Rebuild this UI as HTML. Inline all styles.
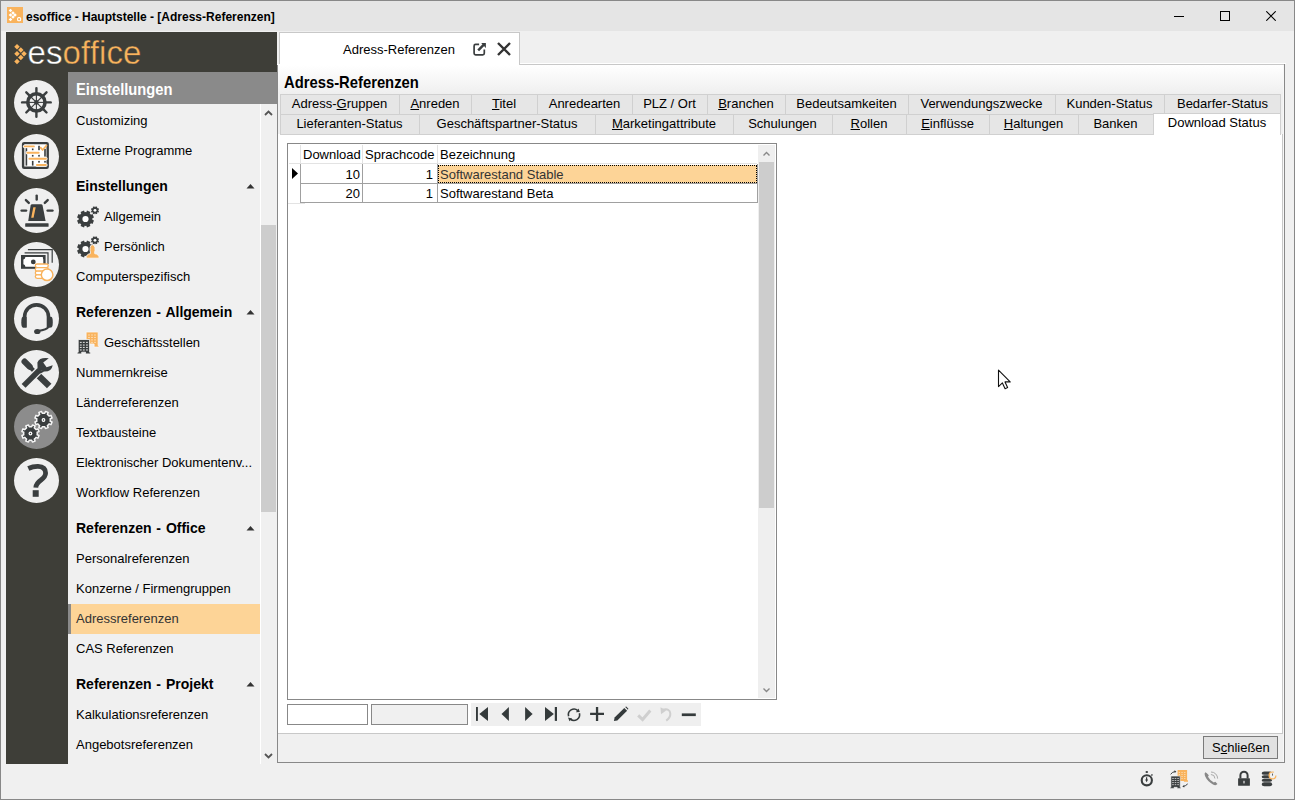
<!DOCTYPE html>
<html><head><meta charset="utf-8">
<style>
*{box-sizing:border-box;margin:0;padding:0}
html,body{width:1295px;height:800px;overflow:hidden;background:#f0f0f0;font-family:'Liberation Sans',sans-serif;color:#000}
.a{position:absolute}
.t{position:absolute;white-space:nowrap}
u{text-decoration:underline;text-underline-offset:1px}
</style></head><body>
<div class="a" style="left:0px;top:0px;width:1295px;height:800px;background:#888;"></div>
<div class="a" style="left:1px;top:1px;width:1293px;height:798px;background:#f0f0f0;"></div>
<div class="a" style="left:1px;top:1px;width:1293px;height:30px;background:#e5e5e5;"></div>
<div class="a" style="left:7px;top:7px;width:16px;height:16px;background:#f9b35d;"></div>
<svg class="a" style="left:7px;top:7px;" width="16" height="16" viewBox="0 0 16 16"></svg>
<svg class="a" style="left:0px;top:0px;" width="30" height="30" viewBox="0 0 30 30"><rect x="9.2" y="9.2" width="2.6" height="2.6" transform="rotate(45 10.5 10.5)" fill="#fff"/><rect x="11.7" y="11.7" width="2.6" height="2.6" transform="rotate(45 13 13)" fill="#fff"/><rect x="9.2" y="13.7" width="2.6" height="2.6" transform="rotate(45 10.5 15)" fill="#fff"/><rect x="13.7" y="13.7" width="2.6" height="2.6" transform="rotate(45 15 15)" fill="#fff"/><rect x="11.7" y="15.7" width="2.6" height="2.6" transform="rotate(45 13 17)" fill="#fff"/><rect x="9.2" y="18.2" width="2.6" height="2.6" transform="rotate(45 10.5 19.5)" fill="#fff"/><rect x="17.6" y="17.6" width="3" height="3.2" rx="1" fill="none" stroke="#fff" stroke-width="1.1"/></svg>
<div class="t" style="left:26px;top:10px;font:bold 12px 'Liberation Sans',sans-serif;color:#000;">esoffice - Hauptstelle - [Adress-Referenzen]</div>
<div class="a" style="left:1174px;top:16px;width:10px;height:1px;background:#000;"></div>
<div class="a" style="left:1220px;top:11px;width:10px;height:10px;border:1px solid #000"></div>
<svg class="a" style="left:1266px;top:11px;" width="10" height="10" viewBox="0 0 10 10"><path d="M0.3 0.3L9.7 9.7M9.7 0.3L0.3 9.7" stroke="#000" stroke-width="1.1"/></svg>
<div class="a" style="left:6px;top:32px;width:271px;height:732px;background:#3e3e38;"></div>
<svg class="a" style="left:12px;top:40px;" width="20" height="28" viewBox="0 0 20 28"><rect x="3.05" y="4.85" width="3.9" height="3.9" transform="rotate(45 5 6.8)" fill="#f9b35d"/><rect x="6.8500000000000005" y="8.05" width="3.9" height="3.9" transform="rotate(45 8.8 10)" fill="#f9b35d"/><rect x="3.05" y="11.850000000000001" width="3.9" height="3.9" transform="rotate(45 5 13.8)" fill="#f9b35d"/><rect x="10.05" y="11.850000000000001" width="3.9" height="3.9" transform="rotate(45 12 13.8)" fill="#f9b35d"/><rect x="6.8500000000000005" y="15.650000000000002" width="3.9" height="3.9" transform="rotate(45 8.8 17.6)" fill="#f9b35d"/><rect x="3.05" y="19.45" width="3.9" height="3.9" transform="rotate(45 5 21.4)" fill="#f9b35d"/></svg>
<div class="t" style="left:27.5px;top:34px;font:normal 33px 'Liberation Sans',sans-serif;letter-spacing:0.1px;-webkit-text-stroke:0.4px #3e3e38"><span style="color:#fff">es</span><span style="color:#f9b35d">office</span></div>
<div class="a" style="left:14px;top:79.5px;width:45px;height:45px;border-radius:50%;background:#efefef"></div>
<div class="a" style="left:14px;top:133.5px;width:45px;height:45px;border-radius:50%;background:#efefef"></div>
<div class="a" style="left:14px;top:187.5px;width:45px;height:45px;border-radius:50%;background:#efefef"></div>
<div class="a" style="left:14px;top:241.5px;width:45px;height:45px;border-radius:50%;background:#efefef"></div>
<div class="a" style="left:14px;top:295.5px;width:45px;height:45px;border-radius:50%;background:#efefef"></div>
<div class="a" style="left:14px;top:349.5px;width:45px;height:45px;border-radius:50%;background:#efefef"></div>
<div class="a" style="left:14px;top:403.5px;width:45px;height:45px;border-radius:50%;background:#8c8c8c"></div>
<div class="a" style="left:14px;top:457.5px;width:45px;height:45px;border-radius:50%;background:#efefef"></div>
<svg class="a" style="left:12px;top:78px;" width="48" height="48" viewBox="0 0 48 48"><circle cx="24.4" cy="24.4" r="8.6" fill="none" stroke="#3a3e3f" stroke-width="3.6"/><circle cx="24.4" cy="24.4" r="2.3" fill="#3a3e3f"/><line x1="24.40" y1="24.40" x2="32.40" y2="24.40" stroke="#3a3e3f" stroke-width="1.1"/><line x1="34.40" y1="24.40" x2="38.70" y2="24.40" stroke="#3a3e3f" stroke-width="2.4" stroke-linecap="round"/><line x1="24.40" y1="24.40" x2="30.06" y2="30.06" stroke="#3a3e3f" stroke-width="1.1"/><line x1="31.47" y1="31.47" x2="34.51" y2="34.51" stroke="#3a3e3f" stroke-width="2.4" stroke-linecap="round"/><line x1="24.40" y1="24.40" x2="24.40" y2="32.40" stroke="#3a3e3f" stroke-width="1.1"/><line x1="24.40" y1="34.40" x2="24.40" y2="38.70" stroke="#3a3e3f" stroke-width="2.4" stroke-linecap="round"/><line x1="24.40" y1="24.40" x2="18.74" y2="30.06" stroke="#3a3e3f" stroke-width="1.1"/><line x1="17.33" y1="31.47" x2="14.29" y2="34.51" stroke="#3a3e3f" stroke-width="2.4" stroke-linecap="round"/><line x1="24.40" y1="24.40" x2="16.40" y2="24.40" stroke="#3a3e3f" stroke-width="1.1"/><line x1="14.40" y1="24.40" x2="10.10" y2="24.40" stroke="#3a3e3f" stroke-width="2.4" stroke-linecap="round"/><line x1="24.40" y1="24.40" x2="18.74" y2="18.74" stroke="#3a3e3f" stroke-width="1.1"/><line x1="17.33" y1="17.33" x2="14.29" y2="14.29" stroke="#3a3e3f" stroke-width="2.4" stroke-linecap="round"/><line x1="24.40" y1="24.40" x2="24.40" y2="16.40" stroke="#3a3e3f" stroke-width="1.1"/><line x1="24.40" y1="14.40" x2="24.40" y2="10.10" stroke="#3a3e3f" stroke-width="2.4" stroke-linecap="round"/><line x1="24.40" y1="24.40" x2="30.06" y2="18.74" stroke="#3a3e3f" stroke-width="1.1"/><line x1="31.47" y1="17.33" x2="34.51" y2="14.29" stroke="#3a3e3f" stroke-width="2.4" stroke-linecap="round"/></svg>
<svg class="a" style="left:12px;top:132px;" width="48" height="48" viewBox="0 0 48 48"><rect x="11.1" y="11.1" width="24.6" height="24.6" rx="1" fill="#fff" stroke="#3a3e3f" stroke-width="2.4"/><rect x="13.6" y="16.2" width="1.6" height="17.400000000000002" fill="#3a3e3f"/><rect x="19.9" y="16.5" width="1.6" height="1.6999999999999993" fill="#3a3e3f"/><rect x="19.9" y="22.8" width="1.6" height="1.8000000000000007" fill="#3a3e3f"/><rect x="19.9" y="28.8" width="1.6" height="4.800000000000001" fill="#3a3e3f"/><rect x="26.2" y="13.8" width="1.6" height="4.399999999999999" fill="#3a3e3f"/><rect x="26.2" y="22.8" width="1.6" height="1.8000000000000007" fill="#3a3e3f"/><rect x="26.2" y="28.8" width="1.6" height="1.8000000000000007" fill="#3a3e3f"/><rect x="32.2" y="16.8" width="1.6" height="7.800000000000001" fill="#3a3e3f"/><rect x="32.2" y="28.8" width="1.6" height="1.8000000000000007" fill="#3a3e3f"/><line x1="12.6" y1="14.4" x2="21.9" y2="14.4" stroke="#fff" stroke-width="3.4" stroke-linecap="round"/><line x1="12.6" y1="14.4" x2="21.9" y2="14.4" stroke="#f9b35d" stroke-width="1.9" stroke-linecap="round"/><line x1="15.3" y1="20.7" x2="26.7" y2="20.7" stroke="#fff" stroke-width="3.4" stroke-linecap="round"/><line x1="15.3" y1="20.7" x2="26.7" y2="20.7" stroke="#f9b35d" stroke-width="1.9" stroke-linecap="round"/><line x1="17.4" y1="26.7" x2="33.9" y2="26.7" stroke="#fff" stroke-width="3.4" stroke-linecap="round"/><line x1="17.4" y1="26.7" x2="33.9" y2="26.7" stroke="#f9b35d" stroke-width="1.9" stroke-linecap="round"/><line x1="24.9" y1="33" x2="33.9" y2="33" stroke="#fff" stroke-width="3.4" stroke-linecap="round"/><line x1="24.9" y1="33" x2="33.9" y2="33" stroke="#f9b35d" stroke-width="1.9" stroke-linecap="round"/><path d="M28.6 15.6L30.6 18L34.5 13.5" fill="none" stroke="#f9b35d" stroke-width="1.7" stroke-linecap="round" stroke-linejoin="round"/></svg>
<svg class="a" style="left:12px;top:186px;" width="48" height="48" viewBox="0 0 48 48"><rect x="13.2" y="37.2" width="23.4" height="3.6" rx="0.6" fill="#3a3e3f"/><path d="M16.2 35.1L18.6 19.6Q18.9 18.3 20.2 18.3H29Q30.3 18.3 30.6 19.6L33.6 35.1Z" fill="#3a3e3f"/><path d="M21.3 21.3H23.7L21.6 31.8H19.2Z" fill="#f9b35d"/><line x1="24.7" y1="9.6" x2="24.7" y2="13.6" stroke="#3a3e3f" stroke-width="2.4" stroke-linecap="round"/><line x1="13.9" y1="14.1" x2="16.8" y2="16.9" stroke="#3a3e3f" stroke-width="2.4" stroke-linecap="round"/><line x1="35.7" y1="14.1" x2="32.8" y2="16.9" stroke="#3a3e3f" stroke-width="2.4" stroke-linecap="round"/><line x1="9.6" y1="24.6" x2="14.1" y2="24.6" stroke="#3a3e3f" stroke-width="2.4" stroke-linecap="round"/><line x1="35.6" y1="24.6" x2="40.5" y2="24.6" stroke="#3a3e3f" stroke-width="2.4" stroke-linecap="round"/></svg>
<svg class="a" style="left:12px;top:240px;" width="48" height="48" viewBox="0 0 48 48"><path d="M15.9 9H40.8V22.8H39.6V10.2H15.9Z" fill="#3a3e3f"/><path d="M12.6 12.3H36.6V24H35.4V13.5H12.6Z" fill="#3a3e3f"/><rect x="9" y="15" width="24.6" height="13.8" fill="#3a3e3f"/><path d="M13.4 17.1H30.8Q31 19.4 31.3 19.6V24.2Q31 24.4 30.8 26.7H13.4Q13.2 24.4 11.4 24.2V19.6Q13.2 19.4 13.4 17.1Z" fill="#fff"/><circle cx="21.3" cy="21.9" r="2.4" fill="#3a3e3f"/><rect x="23.3" y="24.0" width="13" height="3.6" rx="1.8" fill="#fff" stroke="#f9b35d" stroke-width="1.3"/><rect x="23.3" y="27.599999999999998" width="13" height="3.6" rx="1.8" fill="#fff" stroke="#f9b35d" stroke-width="1.3"/><rect x="23.3" y="31.199999999999996" width="13" height="3.6" rx="1.8" fill="#fff" stroke="#f9b35d" stroke-width="1.3"/><rect x="23.3" y="34.8" width="13" height="3.6" rx="1.8" fill="#fff" stroke="#f9b35d" stroke-width="1.3"/><circle cx="35.1" cy="34.8" r="5.8" fill="#fff" stroke="#f9b35d" stroke-width="1.5"/></svg>
<svg class="a" style="left:12px;top:294px;" width="48" height="48" viewBox="0 0 48 48"><path d="M12.6 33.6V22.8A11.9 11.9 0 0 1 36.5 22.8V33.6" fill="none" stroke="#3a3e3f" stroke-width="3.6"/><path d="M14.7 22.8V33.6H11.2Q9.3 33.6 9.3 28.2Q9.3 22.8 11.2 22.8Z" fill="#3a3e3f"/><path d="M35.1 22.8V33.6H38.9Q40.8 33.6 40.8 28.2Q40.8 22.8 38.9 22.8Z" fill="#3a3e3f"/><path d="M36.5 33Q34.8 35.8 26 36.9" fill="none" stroke="#3a3e3f" stroke-width="2"/><ellipse cx="25.3" cy="37.5" rx="3.2" ry="2.6" fill="#3a3e3f"/></svg>
<svg class="a" style="left:12px;top:348px;" width="48" height="48" viewBox="0 0 48 48"><path d="M12.6 13.6L17.6 18.6" stroke="#3a3e3f" stroke-width="6.2" stroke-linecap="round"/><path d="M16.5 17.5L23 24" stroke="#3a3e3f" stroke-width="4"/><path d="M25.6 26.8L37.2 38" stroke="#3a3e3f" stroke-width="6.4"/><path d="M11.6 37.9L27.3 22.2" stroke="#efefef" stroke-width="8"/><path d="M11.6 37.9L27.3 22.2" stroke="#3a3e3f" stroke-width="5.5"/><path d="M25.4 14.4Q27.5 9 36.8 10.2L31.2 14.6L34.6 19.2L40.7 17.2Q39.6 23.8 32.3 23.6L25.6 21.6Z" fill="#3a3e3f"/><path d="M25.2 20.8L32.3 23.6L28.5 25.5Z" fill="#3a3e3f"/></svg>
<svg class="a" style="left:12px;top:402px;" width="48" height="48" viewBox="0 0 48 48"><path d="M38.30 18.00L38.19 19.22L40.07 19.99L38.97 22.66L37.09 21.87L36.31 22.81L35.37 23.59L36.16 25.47L33.49 26.57L32.72 24.69L31.50 24.80L30.28 24.69L29.51 26.57L26.84 25.47L27.63 23.59L26.69 22.81L25.91 21.87L24.03 22.66L22.93 19.99L24.81 19.22L24.70 18.00L24.81 16.78L22.93 16.01L24.03 13.34L25.91 14.13L26.69 13.19L27.63 12.41L26.84 10.53L29.51 9.43L30.28 11.31L31.50 11.20L32.72 11.31L33.49 9.43L36.16 10.53L35.37 12.41L36.31 13.19L37.09 14.13L38.97 13.34L40.07 16.01L38.19 16.78Z" fill="#3a3e3f" stroke="#f4f4f4" stroke-width="1.5" stroke-linejoin="round"/><circle cx="31.5" cy="18" r="1.9" fill="#fff"/><circle cx="31.5" cy="18" r="0.7" fill="#3a3e3f"/><path d="M25.25 31.50L25.14 32.72L27.02 33.49L25.92 36.16L24.04 35.37L23.26 36.31L22.32 37.09L23.11 38.97L20.44 40.07L19.67 38.19L18.45 38.30L17.23 38.19L16.46 40.07L13.79 38.97L14.58 37.09L13.64 36.31L12.86 35.37L10.98 36.16L9.88 33.49L11.76 32.72L11.65 31.50L11.76 30.28L9.88 29.51L10.98 26.84L12.86 27.63L13.64 26.69L14.58 25.91L13.79 24.03L16.46 22.93L17.23 24.81L18.45 24.70L19.67 24.81L20.44 22.93L23.11 24.03L22.32 25.91L23.26 26.69L24.04 27.63L25.92 26.84L27.02 29.51L25.14 30.28Z" fill="#3a3e3f" stroke="#f4f4f4" stroke-width="1.5" stroke-linejoin="round"/><circle cx="18.45" cy="31.5" r="1.9" fill="#fff"/><circle cx="18.45" cy="31.5" r="0.7" fill="#3a3e3f"/></svg>
<svg class="a" style="left:12px;top:456px;" width="48" height="48" viewBox="0 0 48 48"><path d="M16.3 12.5Q21 10.3 26 10.4Q33.6 10.8 33.6 17Q33.6 20.5 29 24Q24 27.6 23.8 31.6" fill="none" stroke="#3a3e3f" stroke-width="4.8"/><rect x="20.7" y="34.2" width="6" height="6.6" fill="#3a3e3f"/></svg>
<div class="a" style="left:68px;top:72px;width:209px;height:32px;background:#8a8a8a;"></div>
<div class="t" style="left:76px;top:81px;font:bold 16px 'Liberation Sans',sans-serif;color:#fff;transform:scaleX(0.92);transform-origin:0 0;">Einstellungen</div>
<div class="a" style="left:68px;top:104px;width:209px;height:660px;background:#f0f0f0;"></div>
<div class="a" style="left:260px;top:104px;width:1px;height:660px;background:#fff;"></div>
<div class="a" style="left:261px;top:225px;width:15px;height:287px;background:#cdcdcd;"></div>
<svg class="a" style="left:264px;top:109px;" width="9" height="7" viewBox="0 0 9 7"><path d="M1 6L4.5 2.5L8 6" fill="none" stroke="#555" stroke-width="1.8"/></svg>
<svg class="a" style="left:264px;top:753px;" width="9" height="7" viewBox="0 0 9 7"><path d="M1 1L4.5 4.5L8 1" fill="none" stroke="#555" stroke-width="1.8"/></svg>
<div class="t" style="left:76px;top:113px;font:normal 13px 'Liberation Sans',sans-serif;color:#000;">Customizing</div>
<div class="t" style="left:76px;top:143px;font:normal 13px 'Liberation Sans',sans-serif;color:#000;">Externe Programme</div>
<div class="t" style="left:76px;top:178px;font:bold 14px 'Liberation Sans',sans-serif;color:#000;word-spacing:1px">Einstellungen</div>
<svg class="a" style="left:246px;top:182px;top:182.5px" width="9" height="6" viewBox="0 0 9 6"><path d="M0.5 5.5L4.5 1L8.5 5.5Z" fill="#333"/></svg>
<div class="t" style="left:104px;top:209px;font:normal 13px 'Liberation Sans',sans-serif;color:#000;">Allgemein</div>
<svg class="a" style="left:74px;top:204px;" width="28" height="28" viewBox="0 0 28 28"><path d="M18.40 15.00L18.35 15.86L19.97 16.48L18.54 19.95L16.95 19.23L16.38 19.88L15.73 20.45L16.45 22.04L12.98 23.47L12.36 21.85L11.50 21.90L10.64 21.85L10.02 23.47L6.55 22.04L7.27 20.45L6.62 19.88L6.05 19.23L4.46 19.95L3.03 16.48L4.65 15.86L4.60 15.00L4.65 14.14L3.03 13.52L4.46 10.05L6.05 10.77L6.62 10.12L7.27 9.55L6.55 7.96L10.02 6.53L10.64 8.15L11.50 8.10L12.36 8.15L12.98 6.53L16.45 7.96L15.73 9.55L16.38 10.12L16.95 10.77L18.54 10.05L19.97 13.52L18.35 14.14Z" fill="#3a3e3f"/><circle cx="11.5" cy="15" r="3.1" fill="#fff"/><path d="M24.20 6.30L24.17 6.70L25.04 7.00L24.35 8.66L23.53 8.26L23.26 8.56L22.96 8.83L23.36 9.65L21.70 10.34L21.40 9.47L21.00 9.50L20.60 9.47L20.30 10.34L18.64 9.65L19.04 8.83L18.74 8.56L18.47 8.26L17.65 8.66L16.96 7.00L17.83 6.70L17.80 6.30L17.83 5.90L16.96 5.60L17.65 3.94L18.47 4.34L18.74 4.04L19.04 3.77L18.64 2.95L20.30 2.26L20.60 3.13L21.00 3.10L21.40 3.13L21.70 2.26L23.36 2.95L22.96 3.77L23.26 4.04L23.53 4.34L24.35 3.94L25.04 5.60L24.17 5.90Z" fill="#3a3e3f"/><circle cx="21" cy="6.3" r="1.4" fill="#fff"/></svg>
<div class="t" style="left:104px;top:239px;font:normal 13px 'Liberation Sans',sans-serif;color:#000;">Persönlich</div>
<svg class="a" style="left:74px;top:234px;" width="28" height="28" viewBox="0 0 28 28"><path d="M18.40 15.00L18.35 15.86L19.97 16.48L18.54 19.95L16.95 19.23L16.38 19.88L15.73 20.45L16.45 22.04L12.98 23.47L12.36 21.85L11.50 21.90L10.64 21.85L10.02 23.47L6.55 22.04L7.27 20.45L6.62 19.88L6.05 19.23L4.46 19.95L3.03 16.48L4.65 15.86L4.60 15.00L4.65 14.14L3.03 13.52L4.46 10.05L6.05 10.77L6.62 10.12L7.27 9.55L6.55 7.96L10.02 6.53L10.64 8.15L11.50 8.10L12.36 8.15L12.98 6.53L16.45 7.96L15.73 9.55L16.38 10.12L16.95 10.77L18.54 10.05L19.97 13.52L18.35 14.14Z" fill="#3a3e3f"/><circle cx="11.5" cy="15" r="3.1" fill="#fff"/><path d="M24.20 6.30L24.17 6.70L25.04 7.00L24.35 8.66L23.53 8.26L23.26 8.56L22.96 8.83L23.36 9.65L21.70 10.34L21.40 9.47L21.00 9.50L20.60 9.47L20.30 10.34L18.64 9.65L19.04 8.83L18.74 8.56L18.47 8.26L17.65 8.66L16.96 7.00L17.83 6.70L17.80 6.30L17.83 5.90L16.96 5.60L17.65 3.94L18.47 4.34L18.74 4.04L19.04 3.77L18.64 2.95L20.30 2.26L20.60 3.13L21.00 3.10L21.40 3.13L21.70 2.26L23.36 2.95L22.96 3.77L23.26 4.04L23.53 4.34L24.35 3.94L25.04 5.60L24.17 5.90Z" fill="#3a3e3f"/><circle cx="21" cy="6.3" r="1.4" fill="#fff"/><path d="M12.1 24.2Q12.1 20.2 16.4 19.6V18Q15.8 16.8 16.1 13.5Q16.4 10.7 18.55 10.7Q20.7 10.7 21 13.5Q21.3 16.8 20.7 18V19.6Q25.2 20.2 25.2 24.2Z" fill="#f9b35d" stroke="#f7f7f7" stroke-width="0.9"/></svg>
<div class="t" style="left:76px;top:269px;font:normal 13px 'Liberation Sans',sans-serif;color:#000;">Computerspezifisch</div>
<div class="t" style="left:76px;top:304px;font:bold 14px 'Liberation Sans',sans-serif;color:#000;word-spacing:1px">Referenzen - Allgemein</div>
<svg class="a" style="left:246px;top:182px;top:308.5px" width="9" height="6" viewBox="0 0 9 6"><path d="M0.5 5.5L4.5 1L8.5 5.5Z" fill="#333"/></svg>
<div class="t" style="left:104px;top:335px;font:normal 13px 'Liberation Sans',sans-serif;color:#000;">Geschäftsstellen</div>
<svg class="a" style="left:74px;top:328px;" width="28" height="28" viewBox="0 0 28 28"><path d="M12.1 4H24.15V17.6H25V19.1H20.1V16H12.1Z" fill="#f9b35d" stroke="#f7f7f7" stroke-width="0.8"/><rect x="14.2" y="6.5" width="1.6" height="1" fill="#fde3c0"/><rect x="14.2" y="8.95" width="1.6" height="1" fill="#fde3c0"/><rect x="14.2" y="11.4" width="1.6" height="1" fill="#fde3c0"/><rect x="14.2" y="13.85" width="1.6" height="1" fill="#fde3c0"/><rect x="17.2" y="6.5" width="1.6" height="1" fill="#fde3c0"/><rect x="17.2" y="8.95" width="1.6" height="1" fill="#fde3c0"/><rect x="17.2" y="11.4" width="1.6" height="1" fill="#fde3c0"/><rect x="17.2" y="13.85" width="1.6" height="1" fill="#fde3c0"/><rect x="20.2" y="6.5" width="1.6" height="1" fill="#fde3c0"/><rect x="20.2" y="8.95" width="1.6" height="1" fill="#fde3c0"/><rect x="20.2" y="11.4" width="1.6" height="1" fill="#fde3c0"/><rect x="20.2" y="13.85" width="1.6" height="1" fill="#fde3c0"/><path d="M4.2 11.5H15.6V24.2H16.6V25.9H11.55V24.2H7.7V25.9H3.15V24.2H4.2Z" fill="#3a3e3f" stroke="#f7f7f7" stroke-width="0.8"/><rect x="5.8999999999999995" y="13.85" width="1.8" height="1.1" fill="#d8d8d8"/><rect x="5.8999999999999995" y="16.5" width="1.8" height="1.1" fill="#d8d8d8"/><rect x="5.8999999999999995" y="18.9" width="1.8" height="1.1" fill="#d8d8d8"/><rect x="5.8999999999999995" y="21.4" width="1.8" height="1.1" fill="#d8d8d8"/><rect x="8.9" y="13.85" width="1.8" height="1.1" fill="#d8d8d8"/><rect x="8.9" y="16.5" width="1.8" height="1.1" fill="#d8d8d8"/><rect x="8.9" y="18.9" width="1.8" height="1.1" fill="#d8d8d8"/><rect x="8.9" y="21.4" width="1.8" height="1.1" fill="#d8d8d8"/><rect x="12.049999999999999" y="13.85" width="1.8" height="1.1" fill="#d8d8d8"/><rect x="12.049999999999999" y="16.5" width="1.8" height="1.1" fill="#d8d8d8"/><rect x="12.049999999999999" y="18.9" width="1.8" height="1.1" fill="#d8d8d8"/><rect x="12.049999999999999" y="21.4" width="1.8" height="1.1" fill="#d8d8d8"/></svg>
<div class="t" style="left:76px;top:365px;font:normal 13px 'Liberation Sans',sans-serif;color:#000;">Nummernkreise</div>
<div class="t" style="left:76px;top:395px;font:normal 13px 'Liberation Sans',sans-serif;color:#000;">Länderreferenzen</div>
<div class="t" style="left:76px;top:425px;font:normal 13px 'Liberation Sans',sans-serif;color:#000;">Textbausteine</div>
<div class="t" style="left:76px;top:455px;font:normal 13px 'Liberation Sans',sans-serif;color:#000;">Elektronischer Dokumentenv...</div>
<div class="t" style="left:76px;top:485px;font:normal 13px 'Liberation Sans',sans-serif;color:#000;">Workflow Referenzen</div>
<div class="t" style="left:76px;top:520px;font:bold 14px 'Liberation Sans',sans-serif;color:#000;word-spacing:1px">Referenzen - Office</div>
<svg class="a" style="left:246px;top:182px;top:524.5px" width="9" height="6" viewBox="0 0 9 6"><path d="M0.5 5.5L4.5 1L8.5 5.5Z" fill="#333"/></svg>
<div class="t" style="left:76px;top:551px;font:normal 13px 'Liberation Sans',sans-serif;color:#000;">Personalreferenzen</div>
<div class="t" style="left:76px;top:581px;font:normal 13px 'Liberation Sans',sans-serif;color:#000;">Konzerne / Firmengruppen</div>
<div class="a" style="left:68px;top:604px;width:192px;height:30px;background:#fdd497;"></div>
<div class="a" style="left:68px;top:604px;width:3px;height:30px;background:#8a8a8a;"></div>
<div class="t" style="left:76px;top:611px;font:normal 13px 'Liberation Sans',sans-serif;color:#333;">Adressreferenzen</div>
<div class="t" style="left:76px;top:641px;font:normal 13px 'Liberation Sans',sans-serif;color:#000;">CAS Referenzen</div>
<div class="t" style="left:76px;top:676px;font:bold 14px 'Liberation Sans',sans-serif;color:#000;word-spacing:1px">Referenzen - Projekt</div>
<svg class="a" style="left:246px;top:182px;top:680.5px" width="9" height="6" viewBox="0 0 9 6"><path d="M0.5 5.5L4.5 1L8.5 5.5Z" fill="#333"/></svg>
<div class="t" style="left:76px;top:707px;font:normal 13px 'Liberation Sans',sans-serif;color:#000;">Kalkulationsreferenzen</div>
<div class="t" style="left:76px;top:737px;font:normal 13px 'Liberation Sans',sans-serif;color:#000;">Angebotsreferenzen</div>
<div class="a" style="left:277px;top:32px;width:1008px;height:32px;background:#f0f0f0;"></div>
<div class="a" style="left:279px;top:32px;width:241px;height:33px;background:#c8c8c8;"></div>
<div class="a" style="left:280px;top:33px;width:239px;height:32px;background:#fff;"></div>
<div class="a" style="left:519px;top:64px;width:766px;height:1px;background:#c8c8c8;"></div>
<div class="a" style="left:520px;top:63px;width:766px;height:1px;background:#fff;"></div>
<div class="t" style="left:343px;top:42px;font:normal 13px 'Liberation Sans',sans-serif;color:#000;">Adress-Referenzen</div>
<svg class="a" style="left:468px;top:38px;" width="24" height="24" viewBox="0 0 24 24"><path d="M11.1 6.4H7.6Q6.1 6.4 6.1 7.9V15.3Q6.1 16.8 7.6 16.8H14.8Q16.3 16.8 16.3 15.3V11.4" fill="none" stroke="#3a3e3f" stroke-width="1.7"/><path d="M10.2 12.3L15.6 6.9" stroke="#3a3e3f" stroke-width="2.5"/><path d="M13.2 5.1H17.85V9.9Z" fill="#3a3e3f"/></svg>
<svg class="a" style="left:497px;top:42px;" width="14" height="14" viewBox="0 0 14 14"><path d="M1 1L13 13M13 1L1 13" stroke="#333" stroke-width="2.4"/></svg>
<div class="a" style="left:277px;top:64px;width:1008px;height:699px;background:#888;"></div>
<div class="a" style="left:278px;top:65px;width:1006px;height:697px;background:#f0f0f0;"></div>
<div class="a" style="left:278px;top:65px;width:1006px;height:29px;background:linear-gradient(#fff,#efefef)"></div>
<div class="a" style="left:519px;top:64px;width:765px;height:1px;background:#c8c8c8;"></div>
<div class="a" style="left:277px;top:64px;width:242px;height:1px;background:#fff;"></div>
<div class="t" style="left:284px;top:73px;font:bold 17px 'Liberation Sans',sans-serif;color:#000;transform:scaleX(0.87);transform-origin:0 0;">Adress-Referenzen</div>
<div class="a" style="left:278px;top:134px;width:1004px;height:599px;background:#fff;"></div>
<div class="a" style="left:278px;top:733px;width:1005px;height:1px;background:#c8c8c8;"></div>
<div class="a" style="left:1282px;top:134px;width:1px;height:600px;background:#c8c8c8;"></div>
<div class="a" style="left:1283px;top:65px;width:1px;height:697px;background:#f8f8f8;"></div>
<div class="a" style="left:280px;top:94px;width:119px;height:20px;background:#d0d0d0;"></div>
<div class="a" style="left:281px;top:95px;width:118px;height:19px;background:#e6e6e6;"></div>
<div class="t" style="left:280px;width:119px;text-align:center;top:96px;font:normal 13px 'Liberation Sans',sans-serif">Adress-<u>G</u>ruppen</div>
<div class="a" style="left:399px;top:94px;width:72px;height:20px;background:#d0d0d0;"></div>
<div class="a" style="left:400px;top:95px;width:71px;height:19px;background:#e6e6e6;"></div>
<div class="t" style="left:399px;width:72px;text-align:center;top:96px;font:normal 13px 'Liberation Sans',sans-serif"><u>A</u>nreden</div>
<div class="a" style="left:471px;top:94px;width:66px;height:20px;background:#d0d0d0;"></div>
<div class="a" style="left:472px;top:95px;width:65px;height:19px;background:#e6e6e6;"></div>
<div class="t" style="left:471px;width:66px;text-align:center;top:96px;font:normal 13px 'Liberation Sans',sans-serif"><u>T</u>itel</div>
<div class="a" style="left:537px;top:94px;width:95px;height:20px;background:#d0d0d0;"></div>
<div class="a" style="left:538px;top:95px;width:94px;height:19px;background:#e6e6e6;"></div>
<div class="t" style="left:537px;width:95px;text-align:center;top:96px;font:normal 13px 'Liberation Sans',sans-serif">Anredearten</div>
<div class="a" style="left:632px;top:94px;width:75px;height:20px;background:#d0d0d0;"></div>
<div class="a" style="left:633px;top:95px;width:74px;height:19px;background:#e6e6e6;"></div>
<div class="t" style="left:632px;width:75px;text-align:center;top:96px;font:normal 13px 'Liberation Sans',sans-serif">PLZ / Ort</div>
<div class="a" style="left:707px;top:94px;width:78px;height:20px;background:#d0d0d0;"></div>
<div class="a" style="left:708px;top:95px;width:77px;height:19px;background:#e6e6e6;"></div>
<div class="t" style="left:707px;width:78px;text-align:center;top:96px;font:normal 13px 'Liberation Sans',sans-serif"><u>B</u>ranchen</div>
<div class="a" style="left:785px;top:94px;width:123px;height:20px;background:#d0d0d0;"></div>
<div class="a" style="left:786px;top:95px;width:122px;height:19px;background:#e6e6e6;"></div>
<div class="t" style="left:785px;width:123px;text-align:center;top:96px;font:normal 13px 'Liberation Sans',sans-serif">Bedeutsamkeiten</div>
<div class="a" style="left:908px;top:94px;width:147px;height:20px;background:#d0d0d0;"></div>
<div class="a" style="left:909px;top:95px;width:146px;height:19px;background:#e6e6e6;"></div>
<div class="t" style="left:908px;width:147px;text-align:center;top:96px;font:normal 13px 'Liberation Sans',sans-serif">Verwendungszwecke</div>
<div class="a" style="left:1055px;top:94px;width:109px;height:20px;background:#d0d0d0;"></div>
<div class="a" style="left:1056px;top:95px;width:108px;height:19px;background:#e6e6e6;"></div>
<div class="t" style="left:1055px;width:109px;text-align:center;top:96px;font:normal 13px 'Liberation Sans',sans-serif">Kunden-Status</div>
<div class="a" style="left:1164px;top:94px;width:117px;height:20px;background:#d0d0d0;"></div>
<div class="a" style="left:1165px;top:95px;width:116px;height:19px;background:#e6e6e6;"></div>
<div class="t" style="left:1164px;width:117px;text-align:center;top:96px;font:normal 13px 'Liberation Sans',sans-serif">Bedarfer-Status</div>
<div class="a" style="left:280px;top:114px;width:139px;height:20px;background:#d0d0d0;"></div>
<div class="a" style="left:281px;top:115px;width:138px;height:19px;background:#e6e6e6;"></div>
<div class="t" style="left:280px;width:139px;text-align:center;top:116px;font:normal 13px 'Liberation Sans',sans-serif">Lieferanten-Status</div>
<div class="a" style="left:419px;top:114px;width:176px;height:20px;background:#d0d0d0;"></div>
<div class="a" style="left:420px;top:115px;width:175px;height:19px;background:#e6e6e6;"></div>
<div class="t" style="left:419px;width:176px;text-align:center;top:116px;font:normal 13px 'Liberation Sans',sans-serif">Geschäftspartner-Status</div>
<div class="a" style="left:595px;top:114px;width:138px;height:20px;background:#d0d0d0;"></div>
<div class="a" style="left:596px;top:115px;width:137px;height:19px;background:#e6e6e6;"></div>
<div class="t" style="left:595px;width:138px;text-align:center;top:116px;font:normal 13px 'Liberation Sans',sans-serif"><u>M</u>arketingattribute</div>
<div class="a" style="left:733px;top:114px;width:99px;height:20px;background:#d0d0d0;"></div>
<div class="a" style="left:734px;top:115px;width:98px;height:19px;background:#e6e6e6;"></div>
<div class="t" style="left:733px;width:99px;text-align:center;top:116px;font:normal 13px 'Liberation Sans',sans-serif">Schulungen</div>
<div class="a" style="left:832px;top:114px;width:74px;height:20px;background:#d0d0d0;"></div>
<div class="a" style="left:833px;top:115px;width:73px;height:19px;background:#e6e6e6;"></div>
<div class="t" style="left:832px;width:74px;text-align:center;top:116px;font:normal 13px 'Liberation Sans',sans-serif"><u>R</u>ollen</div>
<div class="a" style="left:906px;top:114px;width:83px;height:20px;background:#d0d0d0;"></div>
<div class="a" style="left:907px;top:115px;width:82px;height:19px;background:#e6e6e6;"></div>
<div class="t" style="left:906px;width:83px;text-align:center;top:116px;font:normal 13px 'Liberation Sans',sans-serif"><u>E</u>inflüsse</div>
<div class="a" style="left:989px;top:114px;width:89px;height:20px;background:#d0d0d0;"></div>
<div class="a" style="left:990px;top:115px;width:88px;height:19px;background:#e6e6e6;"></div>
<div class="t" style="left:989px;width:89px;text-align:center;top:116px;font:normal 13px 'Liberation Sans',sans-serif"><u>H</u>altungen</div>
<div class="a" style="left:1078px;top:114px;width:75px;height:20px;background:#d0d0d0;"></div>
<div class="a" style="left:1079px;top:115px;width:74px;height:19px;background:#e6e6e6;"></div>
<div class="t" style="left:1078px;width:75px;text-align:center;top:116px;font:normal 13px 'Liberation Sans',sans-serif">Banken</div>
<div class="a" style="left:280px;top:134px;width:1001px;height:1px;background:#d0d0d0;"></div>
<div class="a" style="left:1153px;top:113px;width:128px;height:22px;background:#d0d0d0;"></div>
<div class="a" style="left:1154px;top:114px;width:126px;height:22px;background:#fff;"></div>
<div class="a" style="left:1280px;top:94px;width:1px;height:20px;background:#d0d0d0;"></div>
<div class="t" style="left:1153px;width:128px;text-align:center;top:104px;font:normal 13px 'Liberation Sans',sans-serif;top:103px"></div>
<div class="t" style="left:1168px;top:116px;font:normal 13px 'Liberation Sans',sans-serif;color:#000;"></div>
<div class="t" style="left:1153px;width:128px;text-align:center;top:115px;font:normal 13px 'Liberation Sans',sans-serif">Download Status</div>
<div class="a" style="left:287px;top:143px;width:490px;height:557px;background:#888;"></div>
<div class="a" style="left:288px;top:144px;width:488px;height:555px;background:#fff;"></div>
<div class="a" style="left:300px;top:145px;width:1px;height:19px;background:#e3e3e3;"></div>
<div class="a" style="left:362px;top:145px;width:1px;height:19px;background:#e3e3e3;"></div>
<div class="a" style="left:437px;top:145px;width:1px;height:19px;background:#e3e3e3;"></div>
<div class="a" style="left:289px;top:163px;width:468px;height:1px;background:#e3e3e3;"></div>
<div class="t" style="left:303px;top:147px;font:normal 13px 'Liberation Sans',sans-serif;color:#000;">Download</div>
<div class="t" style="left:365px;top:147px;font:normal 13px 'Liberation Sans',sans-serif;color:#000;">Sprachcode</div>
<div class="t" style="left:440px;top:147px;font:normal 13px 'Liberation Sans',sans-serif;color:#000;">Bezeichnung</div>
<div class="a" style="left:300px;top:183px;width:457px;height:1px;background:#a0a0a0;"></div>
<div class="a" style="left:300px;top:202px;width:457px;height:1px;background:#a0a0a0;"></div>
<div class="a" style="left:300px;top:164px;width:1px;height:39px;background:#a0a0a0;"></div>
<div class="a" style="left:362px;top:164px;width:1px;height:39px;background:#a0a0a0;"></div>
<div class="a" style="left:437px;top:164px;width:1px;height:39px;background:#a0a0a0;"></div>
<div class="a" style="left:757px;top:164px;width:1px;height:39px;background:#a0a0a0;"></div>
<div class="a" style="left:288px;top:203px;width:17px;height:1px;background:#e3e3e3;"></div>
<div class="t" style="right:935px;top:167px;font:normal 13px 'Liberation Sans',sans-serif;color:#000;">10</div>
<div class="t" style="right:862px;top:167px;font:normal 13px 'Liberation Sans',sans-serif;color:#000;">1</div>
<div class="t" style="right:935px;top:186px;font:normal 13px 'Liberation Sans',sans-serif;color:#000;">20</div>
<div class="t" style="right:862px;top:186px;font:normal 13px 'Liberation Sans',sans-serif;color:#000;">1</div>
<div class="a" style="left:438px;top:165px;width:319px;height:18px;background:#fdd497;border:1px dotted #000"></div>
<div class="t" style="left:440px;top:167px;font:normal 13px 'Liberation Sans',sans-serif;color:#333;">Softwarestand Stable</div>
<div class="t" style="left:440px;top:186px;font:normal 13px 'Liberation Sans',sans-serif;color:#000;">Softwarestand Beta</div>
<svg class="a" style="left:292px;top:168px;" width="7" height="12" viewBox="0 0 7 12"><path d="M0 0L6 5.5L0 11Z" fill="#000"/></svg>
<div class="a" style="left:758px;top:145px;width:17px;height:553px;background:#efefef;"></div>
<div class="a" style="left:759px;top:162px;width:15px;height:346px;background:#cdcdcd;"></div>
<svg class="a" style="left:762px;top:150px;" width="9" height="7" viewBox="0 0 9 7"><path d="M1.5 5.5L4.5 2.5L7.5 5.5" fill="none" stroke="#888" stroke-width="1.4"/></svg>
<svg class="a" style="left:762px;top:687px;" width="9" height="7" viewBox="0 0 9 7"><path d="M1.5 1.5L4.5 4.5L7.5 1.5" fill="none" stroke="#888" stroke-width="1.4"/></svg>
<div class="a" style="left:287px;top:704px;width:81px;height:21px;border:1px solid #888;background:#fff"></div>
<div class="a" style="left:371px;top:704px;width:97px;height:21px;border:1px solid #888;background:#f0f0f0"></div>
<div class="a" style="left:471px;top:703px;width:230px;height:23px;background:#efefef;"></div>
<svg class="a" style="left:471px;top:703px;" width="230" height="23" viewBox="0 0 230 23"><rect x="5" y="4" width="1.9" height="13.9" fill="#343a3b"/><path d="M8.3 10.95L17 4V17.9Z" fill="#343a3b"/><path d="M30.5 10.95L37.9 4V17.9Z" fill="#343a3b"/><path d="M54.1 4L61.6 10.95L54.1 17.9Z" fill="#343a3b"/><path d="M74 4L82.9 10.95L74 17.9Z" fill="#343a3b"/><rect x="83.8" y="4" width="2.2" height="13.9" fill="#343a3b"/><path d="M97.6 13.2A5.6 5.6 0 0 1 106.8 7.6M108.4 10.3A5.6 5.6 0 0 1 99.2 15.9" fill="none" stroke="#343a3b" stroke-width="1.6"/><path d="M107.6 5.4L108.8 8.9L104.9 9.2Z" fill="#343a3b"/><path d="M97 14.6L98.5 18.2L101.1 15.6Z" fill="#343a3b"/><path d="M126.05 4V17.9M119.1 10.95H133" stroke="#343a3b" stroke-width="2.3"/><path d="M142.9 17.9L143.6 14.6L153.3 4.9L156.1 7.7L146.3 17.4Z" fill="#343a3b"/><path d="M154.2 4.1L155.2 3.6L157.4 5.8L156.9 6.8Z" fill="#343a3b"/><path d="M167.2 12.4L171.6 16.6L179.3 7.6" fill="none" stroke="#cfcfcf" stroke-width="3"/><path d="M191.5 6.8Q199 5 199.3 10.5Q199.6 14.4 195.2 17.6" fill="none" stroke="#cfcfcf" stroke-width="2"/><path d="M189.5 4.3L190 11.2L195.2 7.4Z" fill="#cfcfcf"/><rect x="210.8" y="10.4" width="14" height="2.7" fill="#343a3b"/></svg>
<div class="a" style="left:1203px;top:736px;width:75px;height:23px;border:1px solid #7a7a7a;background:#e1e1e1"></div>
<div class="t" style="left:1212px;top:740px;font:normal 13px 'Liberation Sans',sans-serif;color:#000;">S<u>c</u>hließen</div>
<svg class="a" style="left:0px;top:0px;" width="1295" height="800" viewBox="0 0 1295 800"><circle cx="1146.8" cy="780.3" r="5.1" fill="none" stroke="#3a3e3f" stroke-width="2.1"/><ellipse cx="1146.8" cy="772" rx="1.3" ry="0.9" fill="#3a3e3f"/><path d="M1151.3 774.6L1152.5 775.4" stroke="#3a3e3f" stroke-width="1.6"/><path d="M1146.6 777.3V780.5" stroke="#3a3e3f" stroke-width="1.2"/><path d="M1145.1 779.6H1148.1L1146.6 782.2Z" fill="#3a3e3f"/><path d="M1177.6 769.9H1187.1V780.3H1188V781.7H1183.9V781H1177.6Z" fill="#f9b35d"/><rect x="1178.7" y="772.0" width="1.3" height="0.8" fill="#fde3c0"/><rect x="1178.7" y="774.1" width="1.3" height="0.8" fill="#fde3c0"/><rect x="1178.7" y="776.1" width="1.3" height="0.8" fill="#fde3c0"/><rect x="1178.7" y="778.1" width="1.3" height="0.8" fill="#fde3c0"/><rect x="1181.4" y="772.0" width="1.3" height="0.8" fill="#fde3c0"/><rect x="1181.4" y="774.1" width="1.3" height="0.8" fill="#fde3c0"/><rect x="1181.4" y="776.1" width="1.3" height="0.8" fill="#fde3c0"/><rect x="1181.4" y="778.1" width="1.3" height="0.8" fill="#fde3c0"/><rect x="1184.1000000000001" y="772.0" width="1.3" height="0.8" fill="#fde3c0"/><rect x="1184.1000000000001" y="774.1" width="1.3" height="0.8" fill="#fde3c0"/><rect x="1184.1000000000001" y="776.1" width="1.3" height="0.8" fill="#fde3c0"/><rect x="1184.1000000000001" y="778.1" width="1.3" height="0.8" fill="#fde3c0"/><path d="M1170.9 776.1H1180.2V787.3H1181V788.4H1177.2V787.3H1174.1V788.4H1170V787.3H1170.9Z" fill="#3a3e3f" stroke="#f6f6f6" stroke-width="0.6"/><rect x="1172.2" y="777.9499999999999" width="1.6" height="0.9" fill="#d0d0d0"/><rect x="1172.2" y="780.05" width="1.6" height="0.9" fill="#d0d0d0"/><rect x="1172.2" y="782.15" width="1.6" height="0.9" fill="#d0d0d0"/><rect x="1172.2" y="784.25" width="1.6" height="0.9" fill="#d0d0d0"/><rect x="1174.7" y="777.9499999999999" width="1.6" height="0.9" fill="#d0d0d0"/><rect x="1174.7" y="780.05" width="1.6" height="0.9" fill="#d0d0d0"/><rect x="1174.7" y="782.15" width="1.6" height="0.9" fill="#d0d0d0"/><rect x="1174.7" y="784.25" width="1.6" height="0.9" fill="#d0d0d0"/><rect x="1177.3" y="777.9499999999999" width="1.6" height="0.9" fill="#d0d0d0"/><rect x="1177.3" y="780.05" width="1.6" height="0.9" fill="#d0d0d0"/><rect x="1177.3" y="782.15" width="1.6" height="0.9" fill="#d0d0d0"/><rect x="1177.3" y="784.25" width="1.6" height="0.9" fill="#d0d0d0"/><path d="M1170.6 774.3Q1172.5 771.8 1175 771.6" fill="none" stroke="#3a3e3f" stroke-width="1"/><path d="M1174.3 770.3L1176.4 771.4L1174.8 773Z" fill="#3a3e3f"/><path d="M1187.7 783.9Q1185.5 786 1183.5 786.4" fill="none" stroke="#3a3e3f" stroke-width="1"/><path d="M1184.2 785L1182.3 786.5L1184.3 787.6Z" fill="#3a3e3f"/><path d="M1205.3 772.3Q1204 773.6 1205 776Q1207.5 781.5 1213 784.5Q1215.3 785.8 1216.8 784.6L1217.5 783.9L1215.3 781.8L1213.8 782.6Q1210 780.6 1208 776.8L1208.8 775.2L1206.6 773Z" fill="#888"/><path d="M1211 772A6.5 6.5 0 0 1 1217.6 778.6" fill="none" stroke="#aaa" stroke-width="1"/><path d="M1210.9 774.5A4 4 0 0 1 1214.9 778.5" fill="none" stroke="#aaa" stroke-width="1"/><path d="M1240.4 778.5V775.3A3.6 3.6 0 0 1 1247.6 775.3V778.5" fill="none" stroke="#3a3e3f" stroke-width="2"/><rect x="1238.1" y="778.2" width="11.8" height="7.6" rx="0.5" fill="#3a3e3f"/><rect x="1243.4" y="780.8" width="1.2" height="2.6" fill="#e8e8e8"/><rect x="1261.7" y="771.6" width="10.4" height="3.2" rx="2.6" fill="#3a3e3f"/><rect x="1261.7" y="775.2" width="10.4" height="3.0" rx="2.6" fill="#3a3e3f"/><rect x="1261.7" y="778.7" width="10.4" height="3.0" rx="2.6" fill="#3a3e3f"/><rect x="1261.7" y="782.2" width="10.4" height="4.0" rx="2.6" fill="#3a3e3f"/><circle cx="1272.5" cy="775.4" r="3.4" fill="#f0f0f0" stroke="#f9b35d" stroke-width="1.2" stroke-dasharray="17 4"/><path d="M1272.5 773.6V775.6" stroke="#3a3e3f" stroke-width="0.8"/></svg>
<svg class="a" style="left:997px;top:369px;" width="16" height="23" viewBox="0 0 16 23"><path d="M1.5 1.2V17.6L5.4 13.9L8.1 19.7L10.6 18.6L8 12.9H13.2Z" fill="#fff" stroke="#111" stroke-width="1.1" stroke-linejoin="round"/></svg>
</body></html>
